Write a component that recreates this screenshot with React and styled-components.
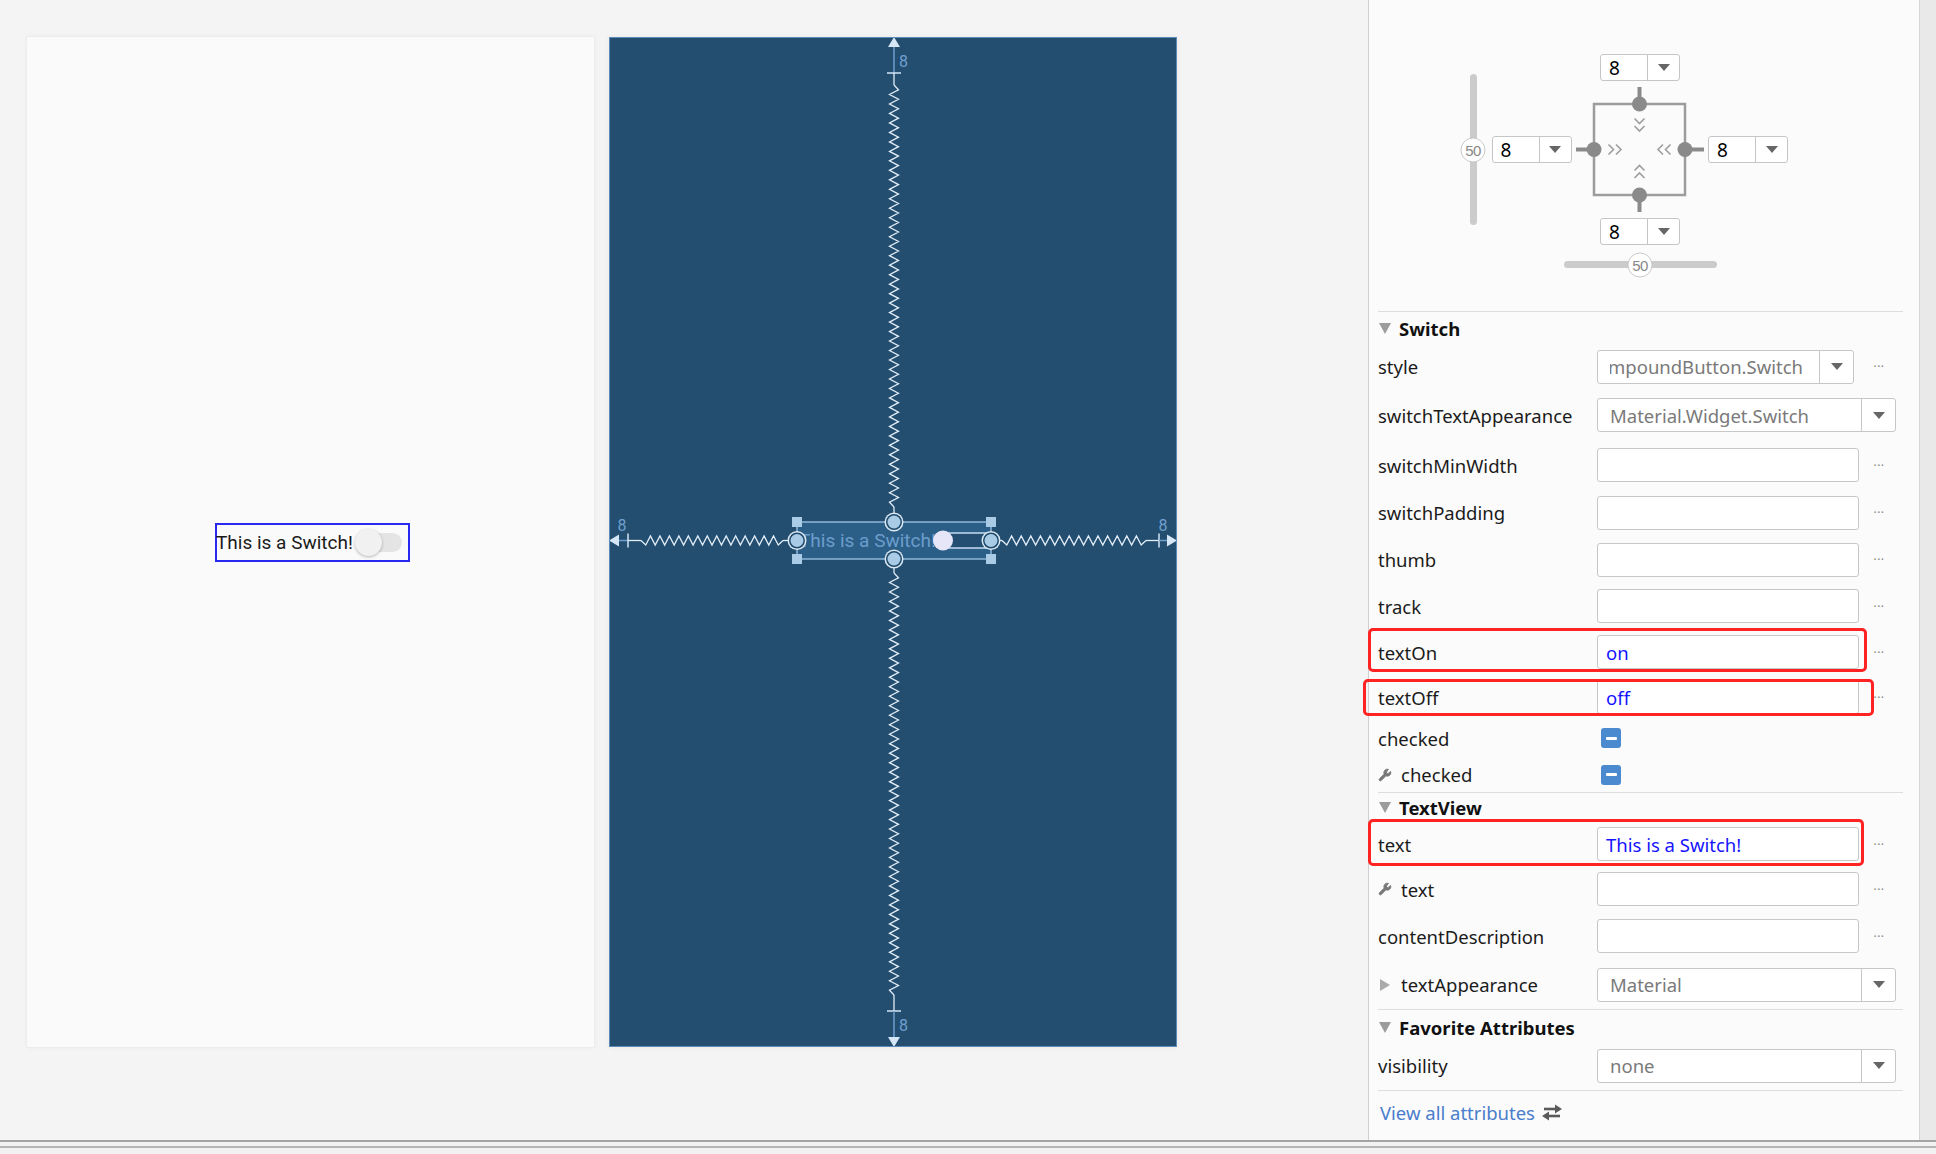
import styled, { createGlobalStyle } from 'styled-components';
import { Wrench } from 'lucide-react';

const GlobalStyle = createGlobalStyle`
  html, body {
    margin: 0;
    padding: 0;
    background: #f4f4f4;
  }
  body {
    font-family: "Noto Sans", "DejaVu Sans", sans-serif;
  }
`;

// blueprint springs
function zigzag(a, b, fixed, vertical) {
  const step = 4.75;
  const amp = 4.5;
  const n = Math.max(2, Math.round((b - a) / step));
  const pts = [];
  for (let i = 0; i <= n; i++) {
    const t = a + (i * (b - a)) / n;
    const off = i === 0 || i === n ? 0 : i % 2 ? amp : -amp;
    pts.push(vertical ? `${fixed + off},${t}` : `${t},${fixed + off}`);
  }
  return pts.join(' ');
}

function Handle({ x, y }) {
  return (
    <g>
      <circle cx={x} cy={y} r="9.5" fill="#dce9f5" />
      <circle cx={x} cy={y} r="8" fill="#1f4a6b" />
      <circle cx={x} cy={y} r="6.5" fill="#a9cbe6" />
    </g>
  );
}

function BlueprintDrawing() {
  const cx = 285;
  const cy = 503.5;
  const L = 188;
  const R = 382;
  const T = 485;
  const B = 522;
  const spring = '#e2edf8';
  const guide = '#6f9fcf';
  const tip = '#d5e6f6';
  return (
    <svg width="568" height="1010" viewBox="0 0 568 1010">
      {/* top */}
      <polygon points={`${cx},0 ${cx - 6},10 ${cx + 6},10`} fill={tip} />
      <line x1={cx} y1="10" x2={cx} y2="36" stroke={guide} strokeWidth="1.5" />
      <line x1={cx - 7} y1="36" x2={cx + 7} y2="36" stroke={tip} strokeWidth="1.5" />
      <polyline points={`${cx},36 ${cx},48`} stroke={spring} strokeWidth="1.3" fill="none" />
      <polyline points={zigzag(48, 470, cx, true)} stroke={spring} strokeWidth="1.3" fill="none" />
      <polyline points={`${cx},470 ${cx},477`} stroke={spring} strokeWidth="1.3" fill="none" />
      <text x={cx + 5} y="30" fontFamily="Roboto, sans-serif" fontSize="16" fill="#6f9fd0">8</text>

      {/* bottom */}
      <polyline points={`${cx},531 ${cx},536`} stroke={spring} strokeWidth="1.3" fill="none" />
      <polyline points={zigzag(536, 958, cx, true)} stroke={spring} strokeWidth="1.3" fill="none" />
      <polyline points={`${cx},958 ${cx},974`} stroke={spring} strokeWidth="1.3" fill="none" />
      <line x1={cx - 7} y1="974" x2={cx + 7} y2="974" stroke={tip} strokeWidth="1.5" />
      <line x1={cx} y1="974" x2={cx} y2="1000" stroke={guide} strokeWidth="1.5" />
      <polygon points={`${cx},1010 ${cx - 6},1000 ${cx + 6},1000`} fill={tip} />
      <text x={cx + 5} y="994" fontFamily="Roboto, sans-serif" fontSize="16" fill="#6f9fd0">8</text>

      {/* left */}
      <polygon points={`0,${cy} 10,${cy - 6} 10,${cy + 6}`} fill={tip} />
      <line x1="10" y1={cy} x2="19" y2={cy} stroke={guide} strokeWidth="1.5" />
      <line x1="19" y1={cy - 7} x2="19" y2={cy + 7} stroke={tip} strokeWidth="1.5" />
      <polyline points={`19,${cy} 32,${cy}`} stroke={spring} strokeWidth="1.3" fill="none" />
      <polyline points={zigzag(32, 174, cy, false)} stroke={spring} strokeWidth="1.3" fill="none" />
      <polyline points={`174,${cy} 180,${cy}`} stroke={spring} strokeWidth="1.3" fill="none" />
      <text x="13" y="494" textAnchor="middle" fontFamily="Roboto, sans-serif" fontSize="16" fill="#6f9fd0">8</text>

      {/* right */}
      <polyline points={`390,${cy} 393,${cy}`} stroke={spring} strokeWidth="1.3" fill="none" />
      <polyline points={zigzag(393, 537, cy, false)} stroke={spring} strokeWidth="1.3" fill="none" />
      <polyline points={`537,${cy} 550,${cy}`} stroke={spring} strokeWidth="1.3" fill="none" />
      <line x1="550" y1={cy - 7} x2="550" y2={cy + 7} stroke={tip} strokeWidth="1.5" />
      <line x1="550" y1={cy} x2="558" y2={cy} stroke={guide} strokeWidth="1.5" />
      <polygon points={`568,${cy} 558,${cy - 6} 558,${cy + 6}`} fill={tip} />
      <text x="554" y="494" textAnchor="middle" fontFamily="Roboto, sans-serif" fontSize="16" fill="#6f9fd0">8</text>

      {/* widget */}
      <rect x={L} y={T} width={R - L} height={B - T} fill="#2c5f88" stroke="#8fb6da" strokeWidth="1.5" />
      <text x="190" y="510" fontFamily="Roboto, sans-serif" fontSize="19" fill="#6b9dcc">This is a Switch!</text>
      <rect x="334" y="496" width="48" height="15" rx="2" fill="#244f72" stroke="#c5dbef" strokeWidth="1.5" />
      <circle cx="334" cy={cy} r="10" fill="#e6e6f8" />

      {[[L, T], [R, T], [L, B], [R, B]].map(([x, y]) => (
        <rect key={`${x}-${y}`} x={x - 5} y={y - 5} width="10" height="10" fill="#a9cbe6" />
      ))}
      <Handle x={cx} y={T} />
      <Handle x={cx} y={B} />
      <Handle x={L} y={cy} />
      <Handle x={R} y={cy} />
    </svg>
  );
}

function ConstraintBox() {
  const line = '#8a8a8a';
  const chev = '#9e9e9e';
  return (
    <svg width="136" height="137" viewBox="0 0 136 137">
      <rect x="22" y="23" width="91" height="91" fill="none" stroke="#9c9c9c" strokeWidth="2.5" />
      <line x1="67.5" y1="6" x2="67.5" y2="23" stroke={line} strokeWidth="4" />
      <line x1="67.5" y1="114" x2="67.5" y2="131" stroke={line} strokeWidth="4" />
      <line x1="4" y1="68.5" x2="22" y2="68.5" stroke={line} strokeWidth="4" />
      <line x1="113" y1="68.5" x2="132" y2="68.5" stroke={line} strokeWidth="4" />
      <circle cx="67.5" cy="23" r="7.5" fill={line} />
      <circle cx="67.5" cy="114" r="7.5" fill={line} />
      <circle cx="22" cy="68.5" r="7.5" fill={line} />
      <circle cx="113" cy="68.5" r="7.5" fill={line} />
      <g fill="none" stroke={chev} strokeWidth="1.6">
        <polyline points="62.5,37.5 67.5,42.5 72.5,37.5" />
        <polyline points="62.5,45 67.5,50 72.5,45" />
        <polyline points="62.5,89.5 67.5,84.5 72.5,89.5" />
        <polyline points="62.5,97 67.5,92 72.5,97" />
        <polyline points="36.5,63.5 41.5,68.5 36.5,73.5" />
        <polyline points="44,63.5 49,68.5 44,73.5" />
        <polyline points="91,63.5 86,68.5 91,73.5" />
        <polyline points="98.5,63.5 93.5,68.5 98.5,73.5" />
      </g>
    </svg>
  );
}

function SwapIcon() {
  return (
    <svg width="22" height="17" viewBox="0 0 22 17">
      <line x1="3" y1="5" x2="15" y2="5" stroke="#5a5a5a" strokeWidth="2.6" />
      <polygon points="14,0.5 21,5 14,9.5" fill="#5a5a5a" />
      <line x1="7" y1="12" x2="19" y2="12" stroke="#5a5a5a" strokeWidth="2.6" />
      <polygon points="8,7.5 1,12 8,16.5" fill="#5a5a5a" />
    </svg>
  );
}

function MarginSelect({ area }) {
  return (
    <MarginBox $area={area}>
      <MarginValue>8</MarginValue>
      <ArrowCell><DownArrow /></ArrowCell>
    </MarginBox>
  );
}

function Select({ value, width, clip }) {
  return (
    <SelectBox $w={width}>
      <SelectValue>
        <ValueClip $clip={clip}><span>{value}</span></ValueClip>
      </SelectValue>
      <SelectArrow><DownArrow /></SelectArrow>
    </SelectBox>
  );
}

function Attr({ label, h, icon, caret, children, dots = true, wide, mark }) {
  return (
    <Row $h={h}>
      <Label>
        {icon && <Wrench size={14} color="#777" fill="#777" strokeWidth={1.5} />}
        {caret && <Caret />}
        {label}
      </Label>
      <FieldCell $wide={wide}>{children}</FieldCell>
      {dots && !wide && <Dots>···</Dots>}
      {mark && <Mark $box={mark} />}
    </Row>
  );
}

export default function App() {
  return (
    <Page>
      <GlobalStyle />
      <Main>
        <Canvas>
          <DesignScreen>
            <SwitchWidget>
              <WidgetText>This is a Switch!</WidgetText>
              <SwitchControl>
                <Track />
                <Thumb />
              </SwitchControl>
            </SwitchWidget>
          </DesignScreen>
          <Blueprint>
            <BlueprintDrawing />
          </Blueprint>
        </Canvas>

        <Inspector>
          <InspectorBody>
            <ConstraintArea>
              <ConstraintGrid>
                <VSlider>
                  <SliderThumb>50</SliderThumb>
                </VSlider>
                <MarginSelect area="1 / 4" />
                <MarginSelect area="2 / 3" />
                <BoxCell>
                  <ConstraintBox />
                </BoxCell>
                <MarginSelect area="2 / 5" />
                <MarginSelect area="3 / 4" />
                <HSlider>
                  <SliderThumb>50</SliderThumb>
                </HSlider>
              </ConstraintGrid>
            </ConstraintArea>

            <Separator />
            <SectionHeader $h={32}><Caret $open />Switch</SectionHeader>
            <Attr label="style" h={45}>
              <Select value="Widget.CompoundButton.Switch" width={257} clip />
            </Attr>
            <Attr label="switchTextAppearance" h={52} wide dots={false}>
              <Select value="Material.Widget.Switch" width={299} />
            </Attr>
            <Attr label="switchMinWidth" h={48}><Input /></Attr>
            <Attr label="switchPadding" h={47}><Input /></Attr>
            <Attr label="thumb" h={47}><Input /></Attr>
            <Attr label="track" h={46}><Input /></Attr>
            <Attr label="textOn" h={46} mark={[-1, 52, 3, -1]}><Input>on</Input></Attr>
            <Attr label="textOff" h={44} mark={[4, 45, 3, -6]}><Input>off</Input></Attr>
            <Attr label="checked" h={38} dots={false}><Check /></Attr>
            <Attr label="checked" h={35} icon dots={false}><Check /></Attr>

            <Separator />
            <SectionHeader $h={29}><Caret $open />TextView</SectionHeader>
            <Attr label="text" h={44} mark={[-3, 55, 0, -1]}><Input>This is a Switch!</Input></Attr>
            <Attr label="text" h={46} icon><Input /></Attr>
            <Attr label="contentDescription" h={48}><Input /></Attr>
            <Attr label="textAppearance" h={49} caret wide dots={false}>
              <Select value="Material" width={299} />
            </Attr>

            <Separator />
            <SectionHeader $h={35}><Caret $open />Favorite Attributes</SectionHeader>
            <Attr label="visibility" h={41} wide dots={false}>
              <Select value="none" width={299} />
            </Attr>
            <Separator $top={4} />
            <LinkRow>
              <ViewAll>View all attributes</ViewAll>
              <SwapIcon />
            </LinkRow>
          </InspectorBody>
          <ScrollTrack />
        </Inspector>
      </Main>
      <Footer>
        <FooterLine />
      </Footer>
    </Page>
  );
}

const Page = styled.div`
  width: 1936px;
  height: 1154px;
  display: flex;
  flex-direction: column;
  background: #f4f4f4;
  overflow: hidden;
`;

const Main = styled.div`
  display: flex;
  height: 1142px;
`;

const Canvas = styled.div`
  flex: none;
  width: 1368px;
  box-sizing: border-box;
  padding: 37px 0 0 27px;
  display: flex;
  align-items: flex-start;
  gap: 15px;
`;

const DesignScreen = styled.div`
  width: 567px;
  height: 1010px;
  background: #fafafa;
  box-shadow: 0 0 0 1px #ededed, 0 0 6px rgba(0, 0, 0, 0.05);
  display: flex;
  align-items: center;
  justify-content: center;
`;

const SwitchWidget = styled.div`
  width: 195px;
  height: 39px;
  box-sizing: border-box;
  border: 2px solid #2828f0;
  margin-left: 4px;
  display: flex;
  align-items: center;
  font-family: Roboto, sans-serif;
  font-size: 19px;
  color: #1a1a1a;
`;

const WidgetText = styled.span`
  white-space: nowrap;
  margin-left: -1px;
`;

const SwitchControl = styled.span`
  position: relative;
  width: 47px;
  height: 27px;
  margin-left: 2px;
`;

const Track = styled.span`
  position: absolute;
  left: 5px;
  right: 0;
  top: 4px;
  bottom: 4px;
  border-radius: 10px;
  background: #e4e4e4;
`;

const Thumb = styled.span`
  position: absolute;
  left: 0;
  top: 0;
  width: 27px;
  height: 27px;
  border-radius: 50%;
  background: #f1f1f1;
  box-shadow: 0 1px 3px rgba(0, 0, 0, 0.28);
`;

const Blueprint = styled.div`
  width: 568px;
  height: 1010px;
  background: #234e6f;
  outline: 1px solid #5d8cb8;
  outline-offset: -1px;
  box-shadow: 0 0 6px rgba(0, 0, 0, 0.06);
  svg {
    display: block;
  }
`;

const Inspector = styled.div`
  flex: 1;
  display: flex;
  background: #fbfbfb;
  border-left: 1px solid #cfcfcf;
`;

const InspectorBody = styled.div`
  flex: 1;
  display: flex;
  flex-direction: column;
  font-size: 18.5px;
  color: #1b1b1b;
`;

const ScrollTrack = styled.div`
  width: 16px;
  background: #e9e9e9;
  border-left: 1px solid #d5d5d5;
`;

const ConstraintArea = styled.div`
  height: 311px;
  box-sizing: border-box;
  padding: 54px 0 0 91px;
`;

const ConstraintGrid = styled.div`
  display: grid;
  grid-template-columns: 26px 5px 81px 136px 80px;
  grid-template-rows: 27px 137px 27px 16px 7px;
`;

const MarginBox = styled.div`
  grid-area: ${(p) => p.$area};
  justify-self: center;
  align-self: center;
  width: 80px;
  height: 27px;
  box-sizing: border-box;
  display: flex;
  background: #fff;
  border: 1px solid #c6c6c6;
  border-radius: 3px;
`;

const MarginValue = styled.div`
  width: 46px;
  padding-left: 8px;
  box-sizing: border-box;
  display: flex;
  align-items: center;
  font-size: 19px;
  color: #000;
`;

const ArrowCell = styled.div`
  flex: 1;
  display: flex;
  align-items: center;
  justify-content: center;
  border-left: 1px solid #c6c6c6;
`;

const DownArrow = styled.span`
  width: 0;
  height: 0;
  border-left: 6px solid transparent;
  border-right: 6px solid transparent;
  border-top: 7px solid #666;
`;

const BoxCell = styled.div`
  grid-area: 2 / 4;
  svg {
    display: block;
  }
`;

const VSlider = styled.div`
  grid-column: 1;
  grid-row: 1 / span 3;
  justify-self: center;
  align-self: center;
  position: relative;
  width: 7px;
  height: 151px;
  border-radius: 4px;
  background: #cbcbcb;
`;

const HSlider = styled.div`
  grid-area: 5 / 4;
  justify-self: center;
  position: relative;
  width: 153px;
  height: 7px;
  border-radius: 4px;
  background: #cbcbcb;
`;

const SliderThumb = styled.span`
  position: absolute;
  left: 50%;
  top: 50%;
  transform: translate(-50%, -50%);
  width: 25px;
  height: 25px;
  box-sizing: border-box;
  border-radius: 50%;
  background: #fff;
  border: 1px solid #c9c9c9;
  display: flex;
  align-items: center;
  justify-content: center;
  font-family: "Liberation Sans", Arial, sans-serif;
  font-size: 15px;
  letter-spacing: -0.5px;
  color: #888;
`;

const Separator = styled.div`
  height: 1px;
  margin: ${(p) => p.$top || 0}px 16px 0 9px;
  background: #dedede;
`;

const SectionHeader = styled.div`
  height: ${(p) => p.$h}px;
  display: flex;
  align-items: center;
  gap: 8px;
  padding-left: 10px;
  font-weight: 700;
  color: #111;
`;

const Caret = styled.span`
  width: 0;
  height: 0;
  ${(p) =>
    p.$open
      ? `
    border-left: 6.5px solid transparent;
    border-right: 6.5px solid transparent;
    border-top: 11px solid #9c9c9c;
  `
      : `
    border-top: 6.5px solid transparent;
    border-bottom: 6.5px solid transparent;
    border-left: 10px solid #aaa;
    margin: 0 2px 0 2px;
  `}
`;

const Row = styled.div`
  position: relative;
  height: ${(p) => p.$h}px;
  padding-left: 9px;
  display: grid;
  grid-template-columns: 219px 265px 34px;
  align-items: center;
`;

const Label = styled.div`
  display: flex;
  align-items: center;
  gap: 9px;
  white-space: nowrap;
`;

const FieldCell = styled.div`
  grid-column: ${(p) => (p.$wide ? '2 / span 2' : '2')};
  display: flex;
  align-items: center;
`;

const Dots = styled.span`
  justify-self: center;
  font-size: 12px;
  letter-spacing: 0.5px;
  color: #888;
`;

const Mark = styled.div`
  position: absolute;
  top: ${(p) => p.$box[0]}px;
  right: ${(p) => p.$box[1]}px;
  bottom: ${(p) => p.$box[2]}px;
  left: ${(p) => p.$box[3]}px;
  border: 3px solid #ff2323;
  border-radius: 5px;
  pointer-events: none;
`;

const Input = styled.div`
  width: 262px;
  height: 34px;
  box-sizing: border-box;
  padding-left: 8px;
  display: flex;
  align-items: center;
  background: #fff;
  border: 1px solid #c7c7c7;
  border-radius: 3px;
  color: #1414ff;
  white-space: nowrap;
`;

const SelectBox = styled.div`
  width: ${(p) => p.$w}px;
  height: 34px;
  box-sizing: border-box;
  display: flex;
  background: #fff;
  border: 1px solid #c7c7c7;
  border-radius: 3px;
`;

const SelectValue = styled.div`
  flex: 1;
  min-width: 0;
  display: flex;
  align-items: center;
  padding-left: 12px;
`;

const ValueClip = styled.div`
  flex: 1;
  min-width: 0;
  overflow: hidden;
  display: flex;
  justify-content: ${(p) => (p.$clip ? 'flex-end' : 'flex-start')};
  padding-right: ${(p) => (p.$clip ? 16 : 0)}px;
  white-space: nowrap;
  color: #7a7a7a;
  span {
    flex: none;
  }
`;

const SelectArrow = styled.div`
  width: 33px;
  display: flex;
  align-items: center;
  justify-content: center;
  border-left: 1px solid #c7c7c7;
`;

const Check = styled.span`
  width: 20px;
  height: 20px;
  margin-left: 4px;
  border-radius: 3px;
  background: #4b8ace;
  display: flex;
  align-items: center;
  justify-content: center;
  &::after {
    content: '';
    width: 11px;
    height: 3px;
    border-radius: 1px;
    background: #fff;
  }
`;

const LinkRow = styled.div`
  height: 42px;
  display: flex;
  align-items: center;
  gap: 6px;
  padding-left: 11px;
`;

const ViewAll = styled.span`
  color: #4a7dcc;
`;

const Footer = styled.div`
  height: 12px;
  border-top: 2px solid #a4a4a4;
  background: #f2f2f2;
`;

const FooterLine = styled.div`
  margin-top: 4px;
  height: 2px;
  background: #b4b4b4;
`;
